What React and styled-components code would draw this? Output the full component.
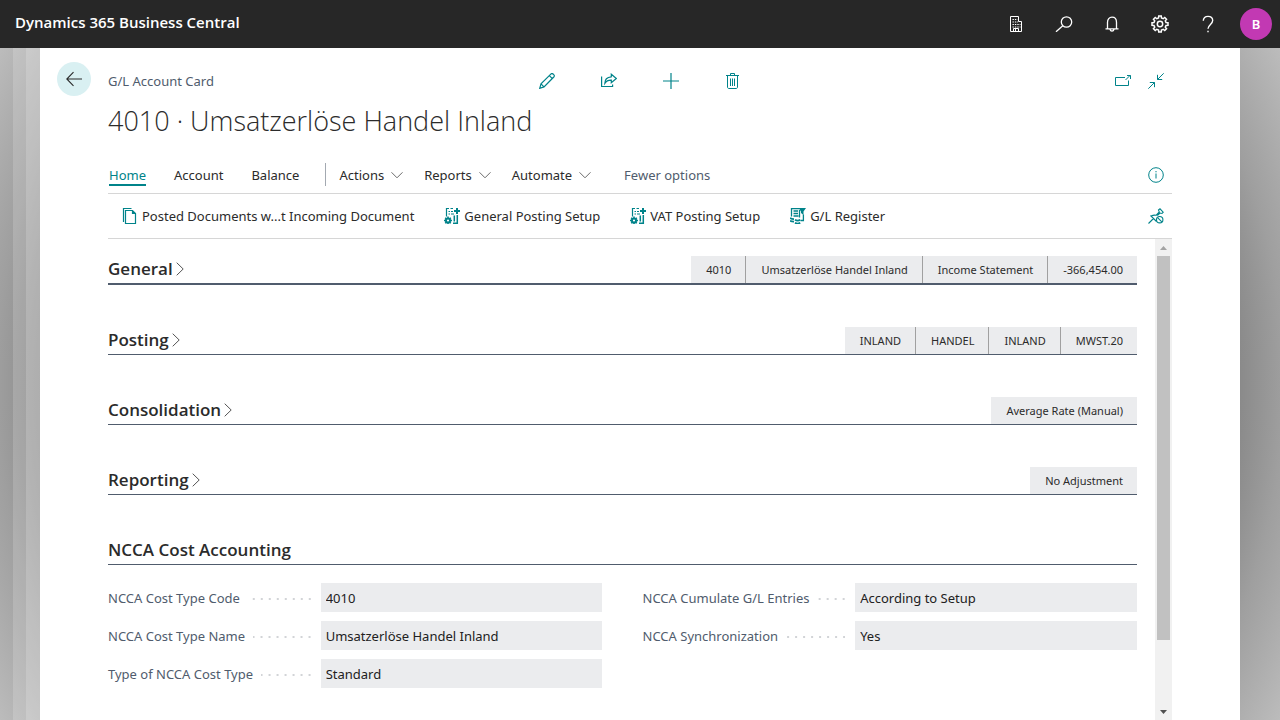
import React from "react";
import styled, { createGlobalStyle } from "styled-components";

const TEAL = "#00838a";
const SLATE = "#505c6d";

const sections = [
  {
    title: "General",
    strong: true,
    tags: ["4010", "Umsatzerlöse Handel Inland", "Income Statement", "-366,454.00"],
  },
  { title: "Posting", tags: ["INLAND", "HANDEL", "INLAND", "MWST.20"] },
  { title: "Consolidation", tags: ["Average Rate (Manual)"] },
  { title: "Reporting", tags: ["No Adjustment"] },
];

const costFields = [
  [
    { id: "typeCode", label: "NCCA Cost Type Code", value: "4010" },
    { id: "typeName", label: "NCCA Cost Type Name", value: "Umsatzerlöse Handel Inland" },
    { id: "costType", label: "Type of NCCA Cost Type", value: "Standard" },
  ],
  [
    { id: "cumulate", label: "NCCA Cumulate G/L Entries", value: "According to Setup" },
    { id: "sync", label: "NCCA Synchronization", value: "Yes" },
  ],
];

const gearPath = (c, outer, inner, teeth) => {
  const step = (Math.PI * 2) / teeth;
  const at = (r, a) => `${(c + r * Math.sin(a)).toFixed(2)} ${(c - r * Math.cos(a)).toFixed(2)}`;
  let d = "";
  for (let i = 0; i < teeth; i++) {
    const a = i * step;
    d += `${i ? "L" : "M"}${at(inner, a - step * 0.3)}L${at(outer, a - step * 0.2)}`;
    d += `L${at(outer, a + step * 0.2)}L${at(inner, a + step * 0.3)}`;
  }
  return d + "Z";
};

const Icon = ({ w = 16, h = 16, children, stroke = 1 }) => (
  <svg
    width={w}
    height={h}
    viewBox={`0 0 ${w} ${h}`}
    fill="none"
    stroke="currentColor"
    strokeWidth={stroke}
    aria-hidden="true"
  >
    {children}
  </svg>
);

const BuildingIcon = () => (
  <Icon>
    <path d="M2.5.5h8v5h3v10h-11z" />
    <path d="M5.5 15.5v-3h5v3M7.5 12.5v3" />
    <path d="M4.5 3.5h5M4.5 6h5.5M4.5 8.5h8M4.5 11h8" strokeDasharray="1.4 1" />
  </Icon>
);

const SearchIcon = () => (
  <Icon w={18} stroke={1.3}>
    <circle cx="11.5" cy="6" r="5.2" />
    <path d="M7.8 9.7 1 15.8" />
  </Icon>
);

const BellIcon = () => (
  <Icon stroke={1.3}>
    <path d="M1.5 12.8h13M3.5 12.8V6.3C3.5 3.3 5.3 1.2 8 1.2s4.5 2.1 4.5 5.1v6.5M6 13.3c.3 1.1 1 1.7 2 1.7s1.7-.6 2-1.7" />
  </Icon>
);

const GearIcon = () => (
  <Icon w={18} h={18} stroke={1.5}>
    <path d={gearPath(9, 8.1, 6.2, 8)} />
    <circle cx="9" cy="9" r="2.7" />
  </Icon>
);

const HelpIcon = () => (
  <Icon w={12} h={18} stroke={1.4}>
    <path d="M1.3 5.8C1.3 3 3.2 1.4 6 1.4s4.7 1.6 4.7 4.2c0 3.5-4.7 4.2-4.7 8.2" />
    <path d="M6 15.8v1.5" />
  </Icon>
);

const BackIcon = () => (
  <Icon stroke={1.1}>
    <path d="M16 8H.8M7.5 1.2.8 8l6.7 6.8" />
  </Icon>
);

const PencilIcon = () => (
  <Icon stroke={1.2}>
    <path d="M.7 15.3 2 10.9 11.8 1.1c1.600-1.600 4.600 1.200 3 2.900L5 13.900zM2 10.900 5 13.900M10.300 2.600l3.100 3.100" />
  </Icon>
);

const ShareIcon = () => (
  <Icon stroke={1.2}>
    <path d="M.6 3.5v10h11v-2" />
    <path d="M3.8 10.4C3.8 6.600 6.200 4.100 10.300 3.800V1.200L15.300 5.500l-5 4.300V7.200C7.200 7.100 5.300 8 3.800 10.400z" />
  </Icon>
);

const PlusIcon = () => (
  <Icon stroke={1.2}>
    <path d="M8 0v16M0 8h16" />
  </Icon>
);

const TrashIcon = () => (
  <Icon>
    <path d="M1 2.500h13M5.500 2.500v-2h4v2M2.500 2.500v11.500c0 1 .5 1.500 1.500 1.500h7c1 0 1.500-.5 1.500-1.500V2.500M5.500 5.500v7.500M7.500 5.500v7.500M9.500 5.500v7.500" />
  </Icon>
);

const PopOutIcon = () => (
  <Icon>
    <path d="M10 4.500H.5v8h13V7.500M10.500 7l4.700-4.700M12 2.500h3.500v3.500" />
  </Icon>
);

const CollapseIcon = () => (
  <Icon>
    <path d="M15.700.3 9.500 6.500M9.500 1.800v4.700h4.700M.3 15.700l6.200-6.200M6.500 14.200V9.500H1.800" />
  </Icon>
);

const InfoIcon = () => (
  <Icon>
    <circle cx="8" cy="8" r="7.300" />
    <path d="M8 6.500v5M8 4v1.300" />
  </Icon>
);

const UnpinIcon = () => (
  <Icon stroke={1.1}>
    <path d="M.5 15.500 5.500 10.500M2.500 7.500l6 6M3.300 8.200C5 7 6.500 7 8 7.300L11.300 4 10.500 2 12 .8 15.200 4.200 14 5.500 12 5 9.300 7.500" />
    <circle cx="11.700" cy="11.700" r="3.200" />
    <path d="m9.600 9.600 4.200 4.200" />
  </Icon>
);

const DocumentsIcon = () => (
  <Icon stroke={1.2}>
    <path d="M9.500.5h-8v13.500" />
    <path d="M3.500 2.500h7l3 3v10h-10zM10.500 2.500v3h3" />
  </Icon>
);

const SetupIcon = () => (
  <Icon>
    <path d="M2.500 8.500V.5H5M6.500.5H9M4.500 3.500h1.500M7 3.500h2M4.500 6h1.500M7 6h3" strokeWidth="1.200" />
    <path d="M13.300 7v8.300H9M10.300 7.500v6" strokeWidth="1.500" />
    <path d="M13 0v6M10 3h6" strokeWidth="2" />
    <circle cx="4" cy="12.500" r="2.100" strokeWidth="2" />
    <path d="M4 8.500v1.500M4 15v1M0 12.500h1.500M6.500 12.500H8M1.200 9.700l1 1M5.800 14.300l1 1M6.800 9.700l-1 1M1.200 15.300l1-1" strokeWidth="1.500" />
  </Icon>
);

const RegisterIcon = () => (
  <Icon>
    <path d="M1.500 8.500V.6H9M3.500 3h4.500M3.500 5.500h4.500M3.500 8h5M9.500 2v7.500" strokeWidth="1.300" />
    <path d="M8.500 0H16l-2.500 3.500v3.500L11 5V3.500z" fill="currentColor" stroke="none" />
    <path d="M13.400 6.500v6H10.500" strokeWidth="1.300" />
    <path d="M0 10c1 .8 2.500 1.200 4 1.200M0 12.700c1 .8 2.500 1 4 1M5 11.800c1.500 1 3.800 1 5.200 0M5 14.700c1.500 1 3.800 1 5.200 0" strokeWidth="1.800" />
  </Icon>
);

const ChevronDown = () => (
  <Icon w={12} h={8}>
    <path d="M.5 1.300 6 6.800l5.500-5.500" />
  </Icon>
);

const ChevronRight = () => (
  <Icon w={8} h={14}>
    <path d="M.7.7 7.200 7 .7 13.300" />
  </Icon>
);

const Field = ({ id, label, value }) => (
  <FieldRow>
    <FieldLabel htmlFor={id}>
      {label}
      <Dots />
    </FieldLabel>
    <FieldInput id={id} defaultValue={value} readOnly />
  </FieldRow>
);

const App = () => {
  return (
    <Page>
      <GlobalStyle />
      <AppBar>
        <AppName>Dynamics 365 Business Central</AppName>
        <AppButton aria-label="Companies"><BuildingIcon /></AppButton>
        <AppButton aria-label="Search"><SearchIcon /></AppButton>
        <AppButton aria-label="Notifications"><BellIcon /></AppButton>
        <AppButton aria-label="Settings"><GearIcon /></AppButton>
        <AppButton aria-label="Help"><HelpIcon /></AppButton>
        <Avatar aria-label="Account manager">B</Avatar>
      </AppBar>
      <Backdrop>
        <Layer $alpha={0} />
        <Layer $alpha={0.17} />
        <Layer $alpha={0.31} />
        <Card>
          <BackButton aria-label="Back"><BackIcon /></BackButton>
          <Body>
            <TopBar>
              <Caption>G/L Account Card</Caption>
              <CardTools>
                <IconButton aria-label="Edit"><PencilIcon /></IconButton>
                <IconButton aria-label="Share"><ShareIcon /></IconButton>
                <IconButton aria-label="New"><PlusIcon /></IconButton>
                <IconButton aria-label="Delete"><TrashIcon /></IconButton>
              </CardTools>
              <WindowTools>
                <IconButton aria-label="Open in new window"><PopOutIcon /></IconButton>
                <IconButton aria-label="Collapse"><CollapseIcon /></IconButton>
              </WindowTools>
            </TopBar>
            <Title>4010 · Umsatzerlöse Handel Inland</Title>
            <MenuBar>
              <Tabs>
                <Tab $active>Home</Tab>
                <Tab>Account</Tab>
                <Tab>Balance</Tab>
              </Tabs>
              <Menus>
                <MenuButton>Actions<ChevronDown /></MenuButton>
                <MenuButton>Reports<ChevronDown /></MenuButton>
                <MenuButton>Automate<ChevronDown /></MenuButton>
              </Menus>
              <FewerButton>Fewer options</FewerButton>
              <IconButton aria-label="Details"><InfoIcon /></IconButton>
            </MenuBar>
            <ActionBar>
              <ActionButton><DocumentsIcon />Posted Documents w...t Incoming Document</ActionButton>
              <ActionButton><SetupIcon />General Posting Setup</ActionButton>
              <ActionButton><SetupIcon />VAT Posting Setup</ActionButton>
              <ActionButton><RegisterIcon />G/L Register</ActionButton>
              <PinSlot>
                <IconButton aria-label="Unpin"><UnpinIcon /></IconButton>
              </PinSlot>
            </ActionBar>
            <Content>
              <Sections>
                {sections.map((section) => (
                  <SectionHead key={section.title} $strong={section.strong}>
                    <SectionTitle>
                      <SectionToggle>{section.title}<ChevronRight /></SectionToggle>
                    </SectionTitle>
                    <Tags>
                      {section.tags.map((tag, i) => (
                        <Tag key={i}>{tag}</Tag>
                      ))}
                    </Tags>
                  </SectionHead>
                ))}
                <div>
                  <SectionHead>
                    <SectionTitle>NCCA Cost Accounting</SectionTitle>
                  </SectionHead>
                  <FieldGrid>
                    {costFields.map((column, i) => (
                      <FieldColumn key={i}>
                        {column.map((field) => (
                          <Field key={field.id} {...field} />
                        ))}
                      </FieldColumn>
                    ))}
                  </FieldGrid>
                </div>
              </Sections>
              <ScrollBar>
                <ScrollButton aria-label="Scroll up" $light>
                  <svg width="7" height="4"><path d="M0 4 3.5 0 7 4z" fill="currentColor" /></svg>
                </ScrollButton>
                <ScrollTrack><ScrollThumb /></ScrollTrack>
                <ScrollButton aria-label="Scroll down">
                  <svg width="7" height="4"><path d="M0 0 3.5 4 7 0z" fill="currentColor" /></svg>
                </ScrollButton>
              </ScrollBar>
            </Content>
          </Body>
        </Card>
      </Backdrop>
    </Page>
  );
};

export default App;

const GlobalStyle = createGlobalStyle`
  * {
    box-sizing: border-box;
  }
  body {
    margin: 0;
    font-family: "Noto Sans", "Open Sans", sans-serif;
    font-size: 13px;
    color: #2b2b2b;
  }
  button {
    display: flex;
    align-items: center;
    padding: 0;
    border: 0;
    background: none;
    font: inherit;
    color: inherit;
    white-space: nowrap;
    cursor: pointer;
  }
  svg {
    flex: none;
    display: block;
  }
`;

const Page = styled.div`
  height: 100vh;
  display: flex;
  flex-direction: column;
  overflow: hidden;
`;

const AppBar = styled.header`
  flex: none;
  display: flex;
  align-items: center;
  height: 48px;
  padding: 0 8px 0 15px;
  background: #272727;
  color: #fff;
`;

const AppName = styled.div`
  flex: 1;
  padding-bottom: 4px;
  font-family: "Open Sans", sans-serif;
  font-size: 15px;
  font-weight: 600;
`;

const AppButton = styled.button`
  width: 48px;
  height: 48px;
  justify-content: center;
`;

const Avatar = styled.button`
  width: 32px;
  height: 32px;
  margin-left: 8px;
  justify-content: center;
  border-radius: 50%;
  background: #c239b3;
  font-size: 13px;
  font-weight: 600;
`;

const Backdrop = styled.div`
  flex: 1;
  min-height: 0;
  display: flex;
  padding-right: 40px;
  background: radial-gradient(circle, #8a8a8a 83%, #9f9f9f 89%, #bcbcbc 100%);
`;

const Layer = styled.div`
  flex: none;
  width: 13px;
  background: rgba(255, 255, 255, ${(props) => props.$alpha});
  &:nth-child(3) {
    width: 14px;
  }
`;

const Card = styled.main`
  flex: 1;
  min-width: 0;
  display: flex;
  gap: 17px;
  padding: 14px 68px 0 17px;
  background: #fff;
`;

const BackButton = styled.button`
  flex: none;
  width: 34px;
  height: 34px;
  justify-content: center;
  border-radius: 50%;
  background: #d9f0f2;
`;

const Body = styled.div`
  flex: 1;
  min-width: 0;
  display: flex;
  flex-direction: column;
`;

const TopBar = styled.div`
  display: grid;
  grid-template-columns: 1fr auto 1fr;
  align-items: center;
  height: 38px;
`;

const Caption = styled.span`
  color: ${SLATE};
`;

const CardTools = styled.div`
  display: flex;
  gap: 46px;
`;

const WindowTools = styled.div`
  display: flex;
  justify-content: flex-end;
  gap: 17px;
  padding-right: 8px;
`;

const IconButton = styled.button`
  color: ${TEAL};
`;

const Title = styled.h1`
  margin: 0;
  padding: 1px 0 15px;
  font-family: "Open Sans", sans-serif;
  font-size: 27px;
  font-weight: 300;
  line-height: 40px;
  white-space: nowrap;
`;

const MenuBar = styled.nav`
  display: flex;
  align-items: center;
  height: 38px;
  padding-right: 8px;
  border-bottom: 1px solid #d6d6d6;
`;

const Tabs = styled.div`
  display: flex;
  gap: 28px;
  padding: 0 26px 0 1px;
  border-right: 1px solid #a3a9b1;
`;

const Tab = styled.button`
  height: 23px;
  padding-top: 2px;
  border-bottom: 2px solid ${(props) => (props.$active ? TEAL : "transparent")};
  color: ${(props) => (props.$active ? TEAL : "inherit")};
`;

const Menus = styled.div`
  display: flex;
  gap: 21px;
  padding-left: 13px;
`;

const MenuButton = styled.button`
  gap: 7px;
  svg {
    color: #6b6b6b;
  }
`;

const FewerButton = styled.button`
  margin: 0 auto 0 33px;
  color: ${SLATE};
`;

const ActionBar = styled.div`
  display: flex;
  align-items: center;
  gap: 30px;
  height: 45px;
  padding: 0 8px 0 14px;
  border-bottom: 1px solid #d6d6d6;
`;

const ActionButton = styled.button`
  gap: 4px;
  svg {
    color: ${TEAL};
  }
`;

const PinSlot = styled.div`
  margin-left: auto;
`;

const Content = styled.div`
  flex: 1;
  min-height: 0;
  display: flex;
  gap: 18px;
`;

const Sections = styled.div`
  flex: 1;
  min-width: 0;
  display: flex;
  flex-direction: column;
  gap: 42px;
  padding-top: 17px;
`;

const SectionHead = styled.div`
  display: flex;
  justify-content: space-between;
  border-bottom: ${(props) => (props.$strong ? 2 : 1)}px solid ${SLATE};
`;

const SectionTitle = styled.h2`
  margin: 0;
  padding-bottom: 2px;
  font-family: "Open Sans", sans-serif;
  font-size: 17px;
  font-weight: 600;
  line-height: 25px;
`;

const SectionToggle = styled.button`
  gap: 3px;
  svg {
    color: #555;
  }
`;

const Tags = styled.div`
  display: flex;
`;

const Tag = styled.span`
  padding: 0 14px 0 15px;
  background: #ebecee;
  font-size: 11px;
  line-height: 27px;
  & + & {
    border-left: 1px solid #a0a0a0;
  }
`;

const FieldGrid = styled.div`
  display: grid;
  grid-template-columns: 1fr 1fr;
  gap: 40px;
  padding-top: 18px;
`;

const FieldColumn = styled.div`
  display: flex;
  flex-direction: column;
  gap: 9px;
`;

const FieldRow = styled.div`
  display: grid;
  grid-template-columns: 43% 57%;
  height: 29px;
`;

const FieldLabel = styled.label`
  display: flex;
  align-items: center;
  gap: 8px;
  padding-right: 10px;
  color: ${SLATE};
  white-space: nowrap;
`;

const Dots = styled.span`
  flex: 1;
  height: 2px;
  margin-top: 3px;
  background: linear-gradient(to right, transparent 6px, #d2d4d7 6px) right / 8px 2px repeat-x;
`;

const FieldInput = styled.input`
  min-width: 0;
  padding: 0 5px;
  border: 0;
  border-radius: 0;
  background: #ebecee;
  font: inherit;
  color: #212121;
`;

const ScrollBar = styled.div`
  display: flex;
  flex-direction: column;
  width: 17px;
  background: #f1f1f1;
`;

const ScrollButton = styled.button`
  flex: none;
  height: 17px;
  justify-content: center;
  color: ${(props) => (props.$light ? "#a3a3a3" : "#505050")};
`;

const ScrollTrack = styled.div`
  flex: 1;
  padding: 0 2px;
`;

const ScrollThumb = styled.div`
  height: 86%;
  width: 13px;
  background: #c1c1c1;
`;
